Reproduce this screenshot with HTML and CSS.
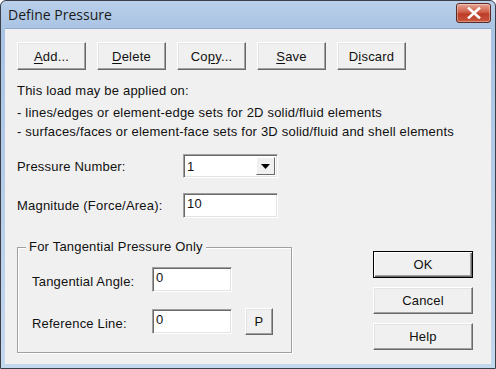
FILE: index.html
```html
<!DOCTYPE html>
<html>
<head>
<meta charset="utf-8">
<link rel="stylesheet" href="styles.css">
</head>
<body>
<div class="window">
  <div class="titlebar">
    <span class="title">Define Pressure</span>
    <button class="close" aria-label="Close">
      <svg width="16" height="12" viewBox="0 0 16 12"><path d="M3 1.5 L13 10.5 M13 1.5 L3 10.5" stroke="#fff" stroke-width="2.6" stroke-linecap="square" fill="none"/></svg>
    </button>
  </div>
  <div class="client">
    <div class="toolbar">
      <button class="btn tb"><u>A</u>dd...</button>
      <button class="btn tb"><u>D</u>elete</button>
      <button class="btn tb">Co<u>p</u>y...</button>
      <button class="btn tb"><u>S</u>ave</button>
      <button class="btn tb">D<u>i</u>scard</button>
    </div>
    <p class="info first">This load may be applied on:</p>
    <p class="info second">- lines/edges or element-edge sets for 2D solid/fluid elements</p>
    <p class="info third">- surfaces/faces or element-face sets for 3D solid/fluid and shell elements</p>
    <div class="row row-select">
      <span class="label">Pressure Number:</span>
      <div class="combo"><span class="combo-val">1</span><span class="combo-btn"><svg width="9" height="5" viewBox="0 0 9 5"><path d="M0 0 H9 L4.5 5 Z" fill="#000"/></svg></span></div>
    </div>
    <div class="row row-mag">
      <span class="label">Magnitude (Force/Area):</span>
      <div class="edit">10</div>
    </div>
    <div class="bottom">
      <div class="group">
        <span class="legend">For Tangential Pressure Only</span>
        <div class="grow g1">
          <span class="glabel">Tangential Angle:</span>
          <div class="edit small">0</div>
        </div>
        <div class="grow g2">
          <span class="glabel">Reference Line:</span>
          <div class="edit small">0</div>
          <button class="btn pbtn">P</button>
        </div>
      </div>
      <div class="actions">
        <button class="btn act default">OK</button>
        <button class="btn act">Cancel</button>
        <button class="btn act">Help</button>
      </div>
    </div>
  </div>
</div>
</body>
</html>
```

FILE: styles.css
```css
* { box-sizing: border-box; }
html, body { margin: 0; padding: 0; }
body {
  width: 496px;
  height: 369px;
  background: #fff;
  font-family: "Liberation Sans", Arial, sans-serif;
  font-size: 13px;
  letter-spacing: 0.2px;
  color: #111;
}
.window {
  width: 496px;
  height: 369px;
  border: 1px solid #3a3f48;
  border-radius: 6px 6px 0 0;
  background: linear-gradient(#b9cfea, #a9c3e3 30px, #c4d8ee);
  padding: 0 4px 4px 4px;
  display: flex;
  flex-direction: column;
}
.titlebar {
  height: 27px;
  display: flex;
  align-items: center;
  justify-content: space-between;
  padding-left: 3px;
}
.title {
  font-family: "Open Sans", "Noto Sans", sans-serif;
  font-size: 14px;
  letter-spacing: 0;
  color: #1a1a1a;
  margin-top: -1px;
}
.close {
  width: 35px;
  height: 20px;
  margin-top: -3px;
  margin-right: 0px;
  border: 1px solid #5a2b24;
  border-radius: 3px;
  background: linear-gradient(#e6a594, #cf6049 45%, #bd3c28 55%, #c9583d);
  box-shadow: inset 0 0 0 1px rgba(255,255,255,0.35);
  display: flex;
  align-items: center;
  justify-content: center;
  padding: 0;
}
.client {
  flex: 1;
  background: #f0f0f0;
  border-top: 1px solid #8fa8c8;
  padding: 13px 0 0 12px;
}
.btn {
  background: #f0f0f0;
  font-family: "Liberation Sans", Arial, sans-serif;
  font-size: 13px;
  letter-spacing: 0.2px;
  color: #111;
  border: 1px solid;
  border-color: #fff #696969 #696969 #fff;
  box-shadow: inset -1px -1px 0 #a0a0a0, inset 1px 1px 0 #e3e3e3;
  padding: 0;
  border-radius: 0;
}
.btn u { text-decoration: underline; text-underline-offset: 2px; }
.toolbar {
  display: flex;
  gap: 11px;
}
.tb {
  width: 69px;
  height: 28px;
}
.info {
  margin: 0;
  line-height: 19px;
}
.info.first { margin-top: 11px; }
.info.second { margin-top: 3px; }
.row {
  display: flex;
  align-items: center;
}
.row .label {
  width: 166px;
}
.row-select { margin-top: 13px; }
.row-mag { margin-top: 15px; }
.combo {
  width: 95px;
  height: 24px;
  display: flex;
  align-items: center;
  border: 1px solid;
  border-color: #a0a0a0 #fff #fff #a0a0a0;
  box-shadow: inset 1px 1px 0 #696969, inset -1px -1px 0 #e3e3e3;
  background: #fff;
  padding: 2px 2px 2px 3px;
}
.combo-val { flex: 1; }
.combo-btn {
  width: 19px;
  height: 18px;
  background: #f0f0f0;
  border: 1px solid;
  border-color: #fff #696969 #696969 #fff;
  display: flex;
  align-items: center;
  justify-content: center;
}
.edit {
  width: 95px;
  height: 25px;
  background: #fff;
  border: 1px solid;
  border-color: #a0a0a0 #fff #fff #a0a0a0;
  box-shadow: inset 1px 1px 0 #696969, inset -1px -1px 0 #e3e3e3;
  padding: 2px 0 0 3px;
  line-height: 15px;
}
.edit.small { width: 80px; }
.bottom {
  display: flex;
  margin-top: 29px;
}
.group {
  position: relative;
  width: 275px;
  height: 106px;
  border: 1px solid #a0a0a0;
  box-shadow: 1px 1px 0 #fff, inset 1px 1px 0 #fff;
  padding: 19px 0 0 14px;
}
.legend {
  position: absolute;
  top: -9px;
  left: 8px;
  background: #f0f0f0;
  padding: 0 3px 0 3px;
  line-height: 16px;
}
.grow {
  display: flex;
  align-items: center;
}
.glabel { width: 120px; padding-top: 3px; }
.g2 { margin-top: 16px; }
.pbtn {
  width: 28px;
  height: 27px;
  margin-left: 13px;
}
.actions {
  display: flex;
  flex-direction: column;
  gap: 9px;
  margin-left: 81px;
  margin-top: 4px;
}
.act {
  width: 100px;
  height: 27px;
}
.act.default {
  border-color: #000;
  box-shadow: inset 1px 1px 0 #fff, inset -1px -1px 0 #696969, inset -2px -2px 0 #a0a0a0;
}
```
